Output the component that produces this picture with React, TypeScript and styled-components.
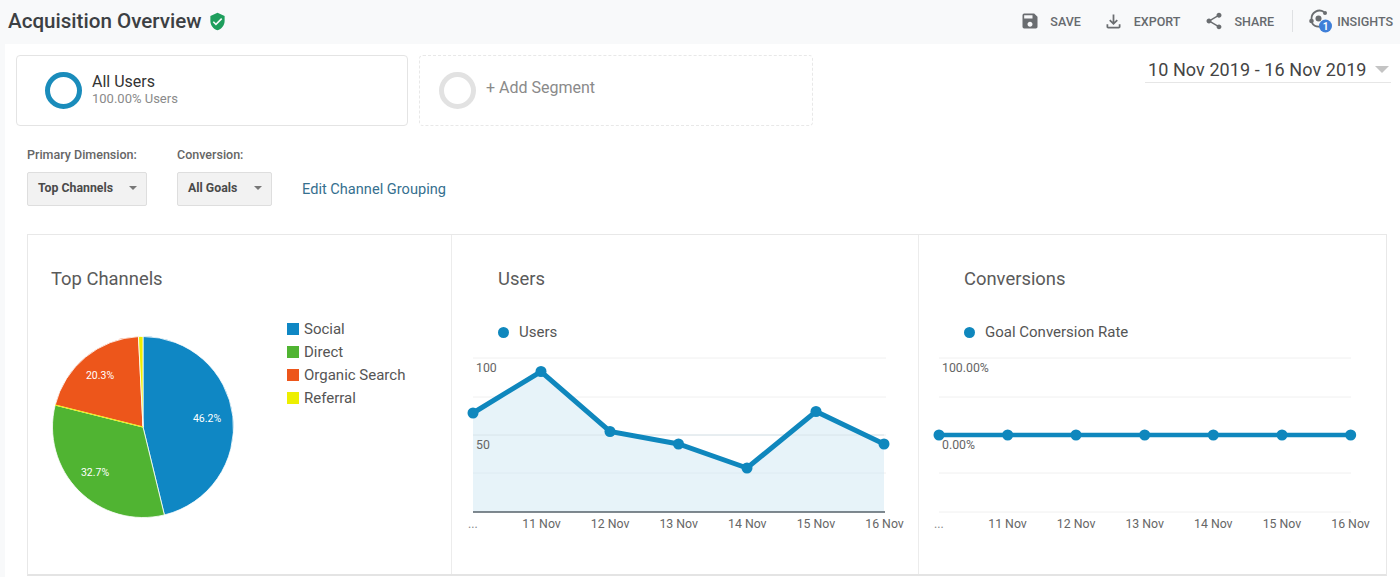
import React from "react"
import styled, { createGlobalStyle } from "styled-components"
import { MdSave, MdShare, MdOutlineFileDownload, MdVerifiedUser } from "react-icons/md"

const GlobalStyle = createGlobalStyle`
  html, body {
    margin: 0;
    padding: 0;
    background: #f8f9fa;
    font-family: Roboto, "Liberation Sans", sans-serif;
  }
  * { box-sizing: border-box; }
`

const Page = styled.div`
  width: 1400px;
  height: 577px;
  overflow: hidden;
  background: #f8f9fa;
`

const Header = styled.header`
  height: 44px;
  display: flex;
  align-items: center;
  justify-content: space-between;
  padding: 0 7px 2px 8px;
`

const TitleGroup = styled.div`
  display: flex;
  align-items: center;
  gap: 6px;
  color: #1e9e5c;
`

const Title = styled.h1`
  margin: 0;
  font-size: 20.6px;
  font-weight: 500;
  color: #3c4043;
`

const Actions = styled.div`
  display: flex;
  align-items: center;
`

const Action = styled.div<{ $gap: number; $space: number }>`
  display: flex;
  align-items: center;
  gap: ${(p) => p.$gap}px;
  margin-right: ${(p) => p.$space}px;
  font-size: 12.5px;
  font-weight: 500;
  color: #666a6e;
  svg { color: #6a6d70; flex-shrink: 0; }
`

const ActionDivider = styled.div`
  width: 1px;
  height: 22px;
  background: #dfe1e3;
  margin-right: 15px;
`

const Content = styled.main`
  margin-left: 5px;
  height: 533px;
  background: #fff;
  padding: 11px 9px 0 11px;
`

const TopRow = styled.div`
  display: flex;
  align-items: flex-start;
  gap: 11px;
`

const SegmentCard = styled.div<{ $dashed?: boolean }>`
  height: 71px;
  width: ${(p) => (p.$dashed ? 394 : 392)}px;
  display: flex;
  align-items: center;
  border-radius: 4px;
  border: 1px ${(p) => (p.$dashed ? "dashed #e8e8e8" : "solid #e4e4e4")};
  padding-left: ${(p) => (p.$dashed ? 19 : 28)}px;
  gap: 10px;
`

const Ring = styled.div<{ $color: string }>`
  width: 37px;
  height: 37px;
  border-radius: 50%;
  border: 5px solid ${(p) => p.$color};
`

const SegmentText = styled.div`
  margin-bottom: 1px;
`

const SegmentName = styled.div`
  font-size: 16px;
  line-height: 17px;
  color: #333;
`

const SegmentSub = styled.div`
  font-size: 13px;
  line-height: 17px;
  color: #8a8a8a;
`

const AddLabel = styled.div`
  font-size: 16px;
  margin-bottom: 6px;
  color: #8a8a8a;
`

const DateRange = styled.div`
  margin: 3px 0 0 auto;
  width: 246px;
  height: 25px;
  padding: 0 2px 2px 3px;
  display: flex;
  align-items: center;
  justify-content: space-between;
  font-size: 18px;
  letter-spacing: 0.08px;
  color: #444;
  border-bottom: 1px solid #e6e6e6;
`

const Caret = styled.span<{ $size: number; $color: string }>`
  width: 0;
  height: 0;
  border-left: ${(p) => p.$size}px solid transparent;
  border-right: ${(p) => p.$size}px solid transparent;
  border-top: ${(p) => p.$size}px solid ${(p) => p.$color};
`

const Filters = styled.div`
  display: flex;
  align-items: flex-end;
  margin: 22px 0 0 11px;
`

const Filter = styled.div<{ $width: number }>`
  width: ${(p) => p.$width}px;
`

const FilterLabel = styled.div`
  font-size: 12.5px;
  line-height: 14px;
  font-weight: 500;
  color: #666;
  margin-bottom: 10px;
`

const Select = styled.div<{ $width: number }>`
  width: ${(p) => p.$width}px;
  height: 34px;
  display: flex;
  align-items: center;
  justify-content: space-between;
  padding: 0 9px 2px 10px;
  font-size: 12.3px;
  font-weight: 700;
  color: #4a4a4a;
  background: #f2f2f2;
  border: 1px solid #dedede;
  border-radius: 2px;
`

const EditLink = styled.a`
  font-size: 14.6px;
  line-height: 34px;
  color: #36708f;
`

const Panels = styled.section`
  display: grid;
  grid-template-columns: 424px 467px 468px;
  width: 1360px;
  height: 342px;
  margin: 28px 0 0 11px;
  border: 1px solid #e8e8e8;
  border-bottom: 2px solid #e4e4e4;
`

const Panel = styled.div<{ $last?: boolean }>`
  border-right: ${(p) => (p.$last ? "none" : "1px solid #ececec")};
  padding-top: 33px;
  min-width: 0;
`

const PanelTitle = styled.h2<{ $left: number }>`
  margin: 0 0 0 ${(p) => p.$left}px;
  font-size: 18.4px;
  line-height: 22px;
  font-weight: 400;
  color: #5a5a5a;
`

const PieRow = styled.div`
  display: flex;
  align-items: flex-start;
  margin-top: 27px;
`

const PieBox = styled.svg`
  display: block;
  margin: 19px 0 0 24px;
  flex-shrink: 0;
`

const Legend = styled.ul`
  list-style: none;
  margin: 0 0 0 53px;
  padding: 0;
`

const LegendRow = styled.li`
  display: flex;
  align-items: center;
  gap: 5px;
  height: 23px;
  font-size: 15px;
  color: #555;
`

const Swatch = styled.span<{ $color: string }>`
  width: 12px;
  height: 12px;
  background: ${(p) => p.$color};
`

const SeriesLegend = styled.div<{ $left: number }>`
  display: flex;
  align-items: center;
  gap: 10px;
  margin: 31px 0 0 ${(p) => p.$left}px;
  height: 22px;
  font-size: 15px;
  color: #555;
`

const Dot = styled.span`
  width: 11px;
  height: 11px;
  border-radius: 50%;
  background: #0f87bd;
`

const ChartSvg = styled.svg`
  display: block;
  margin-top: 10px;
  text { font-family: Roboto, "Liberation Sans", sans-serif; }
`

const BLUE = "#0f87bd"

// everything below is local to the chart svg
const GRID_Y = [5, 44, 82, 120, 159]
const DAYS = ["11 Nov", "12 Nov", "13 Nov", "14 Nov", "15 Nov", "16 Nov"]

function InsightsIcon() {
  return (
    <svg width="26" height="26" viewBox="0 0 26 26" fill="none">
      <path d="M3.5 11 A8 8 0 0 1 16 4" stroke="#6a6d70" strokeWidth="1.8" />
      <path d="M4 15 A8 8 0 0 0 12 18.5" stroke="#6a6d70" strokeWidth="1.8" />
      <circle cx="10.5" cy="10.5" r="3" fill="#6a6d70" />
      <circle cx="3.5" cy="13" r="2.3" fill="#6a6d70" />
      <circle cx="17" cy="5" r="2" fill="#6a6d70" />
      <circle cx="17.5" cy="18" r="6.5" fill="#3f7fd8" />
      <text x="17.5" y="21.5" textAnchor="middle" fontSize="10" fontWeight="700" fill="#fff" fontFamily="Roboto, sans-serif">
        1
      </text>
    </svg>
  )
}

const slices = [
  { pct: 46.2, color: "#0f87c4" },
  { pct: 32.7, color: "#50b432" },
  { pct: 20.3, color: "#ed561b" },
  { pct: 0.8, color: "#edef00" },
]

function PieChart() {
  const cx = 91
  const cy = 91
  const r = 90.5
  let acc = 0
  return (
    <PieBox width="182" height="182" viewBox="0 0 182 182">
      {slices.map((s) => {
        const a0 = (acc / 100) * Math.PI * 2
        acc += s.pct
        const a1 = (acc / 100) * Math.PI * 2
        const large = s.pct > 50 ? 1 : 0
        const d = `M${cx} ${cy} L${cx + r * Math.sin(a0)} ${cy - r * Math.cos(a0)} A${r} ${r} 0 ${large} 1 ${cx + r * Math.sin(a1)} ${cy - r * Math.cos(a1)} Z`
        return <path key={s.color} d={d} fill={s.color} stroke="#fff" strokeWidth="0.8" />
      })}
      <line x1={cx} y1={cy} x2="3" y2="69" stroke="#edef00" strokeWidth="1" />
      <g fontFamily="Roboto, sans-serif" fontSize="10.5" fontWeight="400" fill="#fff" textAnchor="middle">
        <text x="155" y="86">46.2%</text>
        <text x="43" y="140">32.7%</text>
        <text x="48" y="43">20.3%</text>
      </g>
    </PieBox>
  )
}

function UsersChart() {
  const pts: [number, number][] = [
    [21, 60], [89, 18.5], [158, 78.5], [226.5, 91], [295, 115], [364, 58.5], [432, 91],
  ]
  const line = pts.map((p) => p.join(",")).join(" ")
  return (
    <ChartSvg width="466" height="190" viewBox="0 0 466 190">
      {GRID_Y.slice(0, 4).map((y) => (
        <line key={y} x1="21" x2="434" y1={y} y2={y} stroke="#f0f0f0" />
      ))}
      <polygon points={`21,159 ${line} 432,159`} fill="#e7f3f9" />
      <line x1="21" x2="432" y1="82" y2="82" stroke="#d8e4ea" />
      <line x1="21" x2="432" y1="120" y2="120" stroke="#deebf2" />
      <line x1="21" x2="433" y1="159" y2="159" stroke="#56626a" strokeWidth="1.5" />
      <polyline points={line} fill="none" stroke={BLUE} strokeWidth="5" />
      {pts.map(([x, y]) => (
        <circle key={x} cx={x} cy={y} r="5.5" fill={BLUE} />
      ))}
      <g fontSize="12.3" fill="#666">
        <text x="24" y="19">100</text>
        <text x="24" y="96">50</text>
        <text x="16" y="175" fill="#888">...</text>
        {DAYS.map((d, i) => (
          <text key={d} x={89.5 + i * 68.6} y="175" textAnchor="middle">{d}</text>
        ))}
      </g>
    </ChartSvg>
  )
}

function ConversionsChart() {
  const xs = [20, 88.7, 157, 225.7, 294.3, 363, 431.7]
  return (
    <ChartSvg width="467" height="190" viewBox="0 0 467 190">
      {GRID_Y.map((y) => (
        <line key={y} x1="20" x2="432" y1={y} y2={y} stroke="#f0f0f0" />
      ))}
      <line x1="20" x2="432" y1="82" y2="82" stroke={BLUE} strokeWidth="4.5" />
      {xs.map((x) => (
        <circle key={x} cx={x} cy="82" r="5.5" fill={BLUE} />
      ))}
      <g fontSize="12.3" fill="#666">
        <text x="23" y="19">100.00%</text>
        <text x="23" y="96">0.00%</text>
        <text x="15" y="175" fill="#888">...</text>
        {DAYS.map((d, i) => (
          <text key={d} x={88.5 + i * 68.6} y="175" textAnchor="middle">{d}</text>
        ))}
      </g>
    </ChartSvg>
  )
}

export default function App() {
  return (
    <Page>
      <GlobalStyle />
      <Header>
        <TitleGroup>
          <Title>Acquisition Overview</Title>
          <MdVerifiedUser size={19} />
        </TitleGroup>
        <Actions>
          <Action $gap={10} $space={22}>
            <MdSave size={20} />
            SAVE
          </Action>
          <Action $gap={10} $space={24}>
            <MdOutlineFileDownload size={21} />
            EXPORT
          </Action>
          <Action $gap={10} $space={18}>
            <MdShare size={20} />
            SHARE
          </Action>
          <ActionDivider />
          <Action $gap={3} $space={0}>
            <InsightsIcon />
            INSIGHTS
          </Action>
        </Actions>
      </Header>
      <Content>
        <TopRow>
          <SegmentCard>
            <Ring $color="#1a8cbb" />
            <SegmentText>
              <SegmentName>All Users</SegmentName>
              <SegmentSub>100.00% Users</SegmentSub>
            </SegmentText>
          </SegmentCard>
          <SegmentCard $dashed>
            <Ring $color="#e2e2e2" />
            <AddLabel>+ Add Segment</AddLabel>
          </SegmentCard>
          <DateRange>
            10 Nov 2019 - 16 Nov 2019
            <Caret $size={7} $color="#c4c4c4" />
          </DateRange>
        </TopRow>
        <Filters>
          <Filter $width={150}>
            <FilterLabel>Primary Dimension:</FilterLabel>
            <Select $width={120}>
              Top Channels
              <Caret $size={4} $color="#777" />
            </Select>
          </Filter>
          <Filter $width={125}>
            <FilterLabel>Conversion:</FilterLabel>
            <Select $width={95}>
              All Goals
              <Caret $size={4} $color="#777" />
            </Select>
          </Filter>
          <EditLink>Edit Channel Grouping</EditLink>
        </Filters>
        <Panels>
          <Panel>
            <PanelTitle $left={23}>Top Channels</PanelTitle>
            <PieRow>
              <PieChart />
              <Legend>
                <LegendRow><Swatch $color="#0f87c4" />Social</LegendRow>
                <LegendRow><Swatch $color="#50b432" />Direct</LegendRow>
                <LegendRow><Swatch $color="#ed561b" />Organic Search</LegendRow>
                <LegendRow><Swatch $color="#edef00" />Referral</LegendRow>
              </Legend>
            </PieRow>
          </Panel>
          <Panel>
            <PanelTitle $left={46}>Users</PanelTitle>
            <SeriesLegend $left={46}><Dot />Users</SeriesLegend>
            <UsersChart />
          </Panel>
          <Panel $last>
            <PanelTitle $left={45}>Conversions</PanelTitle>
            <SeriesLegend $left={45}><Dot />Goal Conversion Rate</SeriesLegend>
            <ConversionsChart />
          </Panel>
        </Panels>
      </Content>
    </Page>
  )
}
